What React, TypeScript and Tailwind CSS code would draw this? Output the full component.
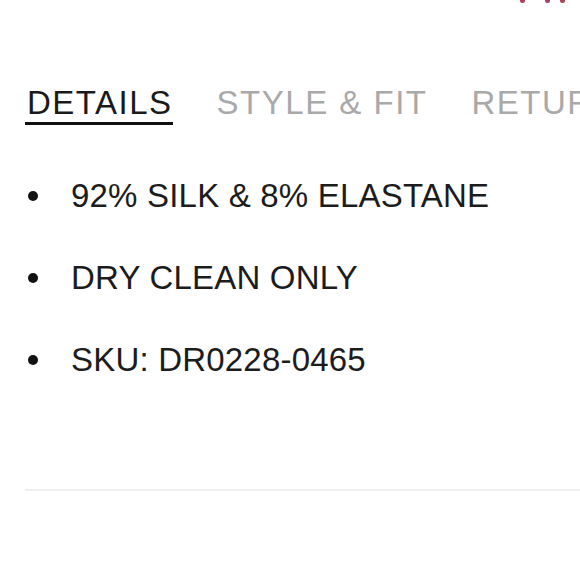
export default function App() {
  const tabs = ["DETAILS", "STYLE & FIT", "RETURNS"];
  const details = ["92% SILK & 8% ELASTANE", "DRY CLEAN ONLY", "SKU: DR0228-0465"];

  return (
    <div
      className="h-[580px] w-[580px] overflow-hidden bg-white"
      style={{ fontFamily: '"Liberation Sans", Arial, sans-serif' }}
    >
      {/* bottom edge of the red price line above, cut off by the frame */}
      <div className="flex h-[3px] pl-[520px]">
        <span className="h-[3px] w-[5px] rounded-b-full bg-[#a8405a]" />
        <span className="ml-[20px] h-[3px] w-[5px] rounded-b-full bg-[#a8405a]" />
        <span className="ml-[10px] h-[3px] w-[5px] rounded-b-full bg-[#a8405a]" />
      </div>

      <div className="pl-[25px] pt-[82px]">
        {/* tabs */}
        <div className="flex gap-[44px] whitespace-nowrap">
          {tabs.map((t, i) => (
            <div
              key={t}
              className={
                i === 0
                  ? "border-b-[3px] border-[#111] pb-[1px] pl-[2px] text-[33px] leading-[36px] tracking-[1.5px] text-[#1a1a1a]"
                  : "pb-[1px] text-[33px] leading-[36px] tracking-[1.5px] text-[#a9a9a9]"
              }
            >
              {t}
            </div>
          ))}
        </div>

        {/* details list */}
        <ul className="mt-[52px] flex flex-col gap-[44px]">
          {details.map((d) => (
            <li key={d} className="flex items-center text-[33px] leading-[38px] tracking-[0.2px] text-[#1c1c1c]">
              <span className="mr-[33px] ml-[3px] h-[10px] w-[10px] rounded-full bg-[#111]" />
              {d}
            </li>
          ))}
        </ul>

        <div className="mt-[110px] h-[2px] bg-[#efefef]" />
      </div>
    </div>
  );
}
